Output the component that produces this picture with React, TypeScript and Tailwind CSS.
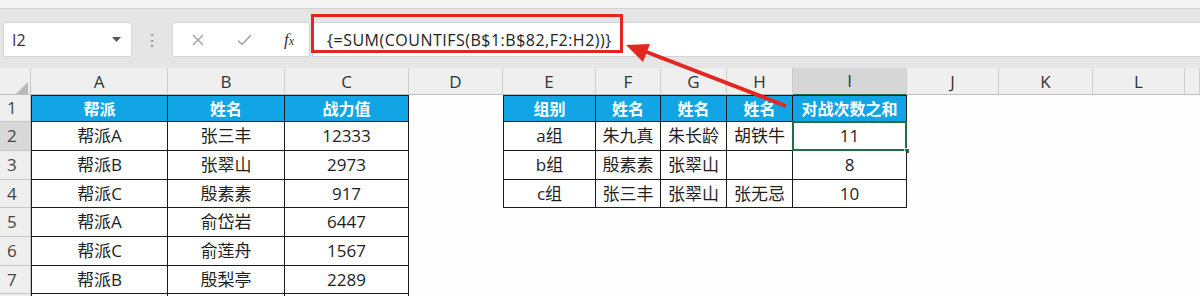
import React from 'react';

const font = "font-['Open_Sans','Noto_Sans_CJK_SC',sans-serif]";
const gridCols =
  'grid grid-cols-[31px_137px_117px_124px_94px_93px_65px_66px_66px_114px_92px_94px_92px_15px]';
const letters = ['A', 'B', 'C', 'D', 'E', 'F', 'G', 'H', 'I', 'J', 'K', 'L', ''];
const rowHeights = ['h-[27px]', 'h-[29px]', 'h-[29px]', 'h-[28px]', 'h-[29px]', 'h-[29px]', 'h-[28px]', 'h-[28px]'];

// values for A..M on each row (row 1 is the blue header row)
const rows: string[][] = [
  ['帮派', '姓名', '战力值', '', '组别', '姓名', '姓名', '姓名', '对战次数之和', '', '', '', ''],
  ['帮派A', '张三丰', '12333', '', 'a组', '朱九真', '朱长龄', '胡铁牛', '11', '', '', '', ''],
  ['帮派B', '张翠山', '2973', '', 'b组', '殷素素', '张翠山', '', '8', '', '', '', ''],
  ['帮派C', '殷素素', '917', '', 'c组', '张三丰', '张翠山', '张无忌', '10', '', '', '', ''],
  ['帮派A', '俞岱岩', '6447', '', '', '', '', '', '', '', '', '', ''],
  ['帮派C', '俞莲舟', '1567', '', '', '', '', '', '', '', '', '', ''],
  ['帮派B', '殷梨亭', '2289', '', '', '', '', '', '', '', '', '', ''],
  ['', '', '', '', '', '', '', '', '', '', '', '', ''],
];

function inTable(r: number, c: number) {
  if (c <= 2) return true;
  if (c >= 4 && c <= 8 && r <= 3) return true;
  return false;
}

function Cell({ r, c, value }: { r: number; c: number; value: string }) {
  if (!inTable(r, c)) return <div className="bg-[#fdfdfd]" />;
  const header = r === 0;
  const selected = r === 1 && c === 8;
  return (
    <div
      className={[
        'relative flex items-center justify-center border-r border-b border-[#1c1c1c] whitespace-nowrap',
        c === 0 || c === 4 ? 'border-l' : '',
        header ? 'border-t bg-[#12a5e5] text-white font-bold text-[16px]' : 'bg-white text-[#1e1e1e] text-[17px]',
      ].join(' ')}
    >
      {value}
      {selected && (
        <>
          <div className="absolute -left-px -top-px -right-px -bottom-px border-2 border-[#1e7145]" />
          <div className="absolute -right-[4px] -bottom-[4px] w-[6px] h-[6px] bg-[#1e7145] border border-white" />
        </>
      )}
    </div>
  );
}

function FormulaBar() {
  return (
    <div className="h-[59px] bg-[#e5e5e5] pt-[13px] flex items-start">
      <div className="ml-[3px] w-[129px] h-[35px] bg-white border border-[#d4d4d4] rounded-[2px] flex items-center justify-between pl-[8px] pr-[10px]">
        <span className="text-[16px] text-[#333]">I2</span>
        <svg width="9" height="5" viewBox="0 0 9 5">
          <path d="M0 0 L9 0 L4.5 5 Z" fill="#555" />
        </svg>
      </div>
      <div className="w-[40px] h-[35px] flex items-center justify-center text-[#8a8a8a] text-[16px]">⋮</div>
      <div className="w-[138px] h-[35px] bg-white border border-[#d4d4d4] rounded-[2px] flex items-center pl-[19px]">
        <svg width="12" height="12" viewBox="0 0 12 12">
          <path d="M1 1 L11 11 M11 1 L1 11" stroke="#9c9c9c" strokeWidth="1.3" />
        </svg>
        <svg className="ml-[33px]" width="15" height="12" viewBox="0 0 15 12">
          <path d="M1 6.5 L5 10.5 L14 1" stroke="#9c9c9c" strokeWidth="1.3" fill="none" />
        </svg>
        <span className="ml-[32px] font-['Liberation_Serif'] italic text-[17px] text-[#333] leading-none">
          f<span className="text-[12px]">x</span>
        </span>
      </div>
      <div className="ml-[2px] flex-1 h-[35px] bg-white border-y border-l border-[#d4d4d4] flex items-center pl-[14px]">
        <span className="text-[16px] text-[#222] tracking-[0.5px]">{'{=SUM(COUNTIFS(B$1:B$82,F2:H2))}'}</span>
      </div>
    </div>
  );
}

export default function App() {
  return (
    <div className={`relative w-[1200px] h-[296px] overflow-hidden bg-white ${font}`}>
      <div className="h-[9px] bg-[#f5f5f5] border-b border-[#d2d2d2]" />
      <FormulaBar />

      {/* column headers */}
      <div className={`${gridCols} h-[27px] bg-[#efefef] border-b border-[#bdbdbd]`}>
        <div className="relative border-r border-[#c8c8c8]">
          <svg className="absolute right-[2px] bottom-[2px]" width="12" height="12" viewBox="0 0 12 12">
            <path d="M12 0 L12 12 L0 12 Z" fill="#b9b9b9" />
          </svg>
        </div>
        {letters.map((l, i) => (
          <div
            key={i}
            className={[
              'flex items-center justify-center text-[17px] text-[#333] border-r border-[#cdcdcd]',
              l === 'I' ? 'bg-[#d6d6d6] border-b-2 border-b-[#1e7145]' : '',
            ].join(' ')}
          >
            {l}
          </div>
        ))}
      </div>

      {rows.map((row, r) => (
        <div key={r} className={`${gridCols} ${rowHeights[r]}`}>
          <div
            className={[
              'flex items-center pl-[7px] text-[17px] text-[#444] border-r border-b border-[#c4c4c4]',
              r === 1 ? 'bg-[#d8d8d8]' : 'bg-[#efefef]',
            ].join(' ')}
          >
            {r < 7 ? r + 1 : ''}
          </div>
          {row.map((v, c) => (
            <Cell key={c} r={r} c={c} value={v} />
          ))}
        </div>
      ))}

      {/* red annotation */}
      <div className="absolute left-[311px] top-[14px] w-[312px] h-[39px] border-[3px] border-[#e3261f]" />
      <svg className="absolute left-0 top-0 pointer-events-none" width="1200" height="296">
        <line x1="786" y1="106" x2="644" y2="51" stroke="#e3261f" strokeWidth="4" />
        <polygon points="626,45 650,44 643,62" fill="#e3261f" />
      </svg>
    </div>
  );
}
